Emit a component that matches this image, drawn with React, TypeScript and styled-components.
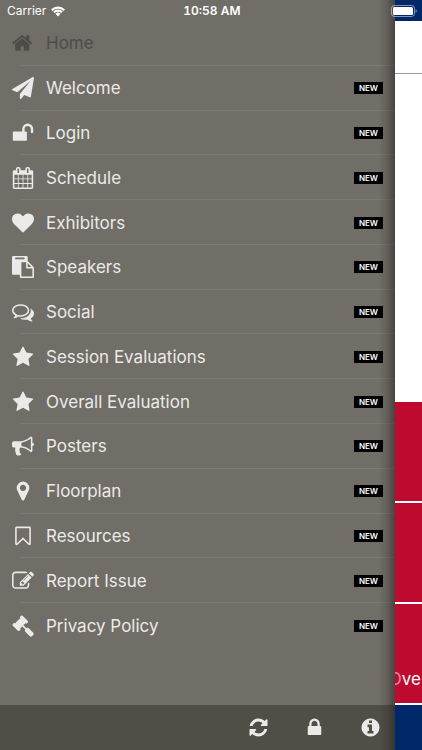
import React from "react";
import styled, { createGlobalStyle } from "styled-components";

const GlobalStyle = createGlobalStyle`
  *, *::before, *::after { box-sizing: border-box; }
  body {
    margin: 0;
    background: #fff;
    font-family: Inter, Roboto, "Liberation Sans", sans-serif;
  }
`;

const paths = {
  home: "M1408 992v480q0 26-19 45t-45 19h-384v-384h-256v384h-384q-26 0-45-19t-19-45v-480q0-1 .5-3t.5-3l575-474 575 474q1 2 1 6zm223-69l-62 74q-8 9-21 11h-3q-13 0-21-7l-692-577-692 577q-12 8-24 7-13-2-21-11l-62-74q-8-10-7-23.5t11-21.5l719-599q32-26 76-26t76 26l244 204v-195q0-14 9-23t23-9h192q14 0 23 9t9 23v408l219 182q10 8 11 21.5t-7 23.5z",
  plane: "M1764 11q33 24 27 64l-256 1536q-5 29-32 45-14 8-31 8-11 0-24-5l-453-185-242 295q-18 23-49 23-13 0-22-4-19-7-30.5-23.5t-11.5-36.5v-349l864-1059-1069 925-395-162q-37-14-40-55-2-40 32-59l1664-960q15-9 32-9 20 0 36 11z",
  unlock: "M1728 576v256q0 26-19 45t-45 19h-64q-26 0-45-19t-19-45v-256q0-106-75-181t-181-75-181 75-75 181v192h96q40 0 68 28t28 68v576q0 40-28 68t-68 28h-960q-40 0-68-28t-28-68v-576q0-40 28-68t68-28h672v-192q0-185 131.5-316.5t316.5-131.5 316.5 131.5 131.5 316.5z",
  calendar: "M192 1664h288v-288h-288v288zm352 0h320v-288h-320v288zm-352-352h288v-320h-288v320zm352 0h320v-320h-320v320zm-352-384h288v-288h-288v288zm736 736h320v-288h-320v288zm-384-736h320v-288h-320v288zm768 736h288v-288h-288v288zm-384-352h320v-320h-320v320zm-352-864v-288q0-13-9.5-22.5t-22.5-9.5h-64q-13 0-22.5 9.5t-9.5 22.5v288q0 13 9.5 22.5t22.5 9.5h64q13 0 22.5-9.5t9.5-22.5zm736 864h288v-320h-288v320zm-384-384h320v-288h-320v288zm384 0h288v-288h-288v288zm32-480v-288q0-13-9.5-22.5t-22.5-9.5h-64q-13 0-22.5 9.5t-9.5 22.5v288q0 13 9.5 22.5t22.5 9.5h64q13 0 22.5-9.5t9.5-22.5zm384-64v1280q0 52-38 90t-90 38h-1408q-52 0-90-38t-38-90v-1280q0-52 38-90t90-38h128v-96q0-66 47-113t113-47h64q66 0 113 47t47 113v96h384v-96q0-66 47-113t113-47h64q66 0 113 47t47 113v96h128q52 0 90 38t38 90z",
  heart: "M896 1664q-26 0-44-18l-624-602q-10-8-27.5-26t-55.5-65.5-68-97.5-53.5-121-23.5-138q0-220 127-344t351-124q62 0 126.5 21.5t120 58 95.5 68.5 76 68q36-36 76-68t95.5-68.5 120-58 126.5-21.5q224 0 351 124t127 344q0 221-229 450l-623 600q-18 18-44 18z",
  paste: "M768 1664h896v-640h-416q-40 0-68-28t-28-68v-416h-384v1152zm256-1440v-64q0-13-9.5-22.5t-22.5-9.5h-704q-13 0-22.5 9.5t-9.5 22.5v64q0 13 9.5 22.5t22.5 9.5h704q13 0 22.5-9.5t9.5-22.5zm256 672h299l-299-299v299zm512 128v672q0 40-28 68t-68 28h-960q-40 0-68-28t-28-68v-160h-544q-40 0-68-28t-28-68v-1344q0-40 28-68t68-28h1088q40 0 68 28t28 68v328q21 13 36 28l408 408q28 28 48 76t20 88z",
  comments: "M704 384q-153 0-286 52t-211.5 141-78.5 191q0 82 53 158t149 132l97 56-35 84q34-20 62-39l44-31 53 10q78 14 153 14 153 0 286-52t211.5-141 78.5-191-78.5-191-211.5-141-286-52zm0-128q191 0 353.5 68.5t256.5 186.5 94 257-94 257-256.5 186.5-353.5 68.5q-86 0-176-16-124 88-278 128-36 9-86 16h-3q-11 0-20.5-8t-11.5-21q-1-3-1-6.5t.5-6.5 2-6l2.5-5 3.5-5.5 4-5 4.5-5 4-4.5q5-6 23-25t26-29.5 22.5-29 25-38.5 20.5-44q-124-72-195-177t-71-224q0-139 94-257t256.5-186.5 353.5-68.5zm822 1169q10 24 20.5 44t25 38.5 22.5 29 26 29.5 23 25q1 1 4 4.5t4.5 5 4 5 3.5 5.5l2.5 5 2 6 .5 6.5-1 6.5q-3 14-13 22t-22 7q-50-7-86-16-154-40-278-128-90 16-176 16-271 0-472-132 58 4 88 4 161 0 309-45t264-129q125-92 192-212t67-254q0-77-23-152 129 71 204 178t75 230q0 120-71 224.5t-195 176.5z",
  star: "M1728 647q0 22-26 48l-363 354 86 500q1 7 1 20 0 21-10.5 35.5t-30.5 14.5q-19 0-40-12l-449-236-449 236q-22 12-40 12-21 0-31.5-14.5t-10.5-35.5q0-6 2-20l86-500-364-354q-25-27-25-48 0-37 56-46l502-73 225-455q19-41 49-41t49 41l225 455 502 73q56 9 56 46z",
  bullhorn: "M1664 640q53 0 90.5 37.5t37.5 90.5-37.5 90.5-90.5 37.5v384q0 52-38 90t-90 38q-417-347-812-380-58 19-91 66t-31 100.5 40 92.5q-20 33-23 65.5t6 58 33.5 55 48 50 61.5 50.5q-29 58-111.5 83t-168.5 11.5-132-55.5q-7-23-29.5-87.5t-32-94.5-23-89-15-101 3.5-98.5 22-110.5h-122q-66 0-113-47t-47-113v-192q0-66 47-113t113-47h480q435 0 896-384 52 0 90 38t38 90v384zm-128 604v-954q-394 302-768 343v270q377 42 768 341z",
  marker: "M1152 640q0-106-75-181t-181-75-181 75-75 181 75 181 181 75 181-75 75-181zm256 0q0 109-33 179l-364 774q-16 33-47.5 52t-67.5 19-67.5-19-46.5-52l-365-774q-33-70-33-179 0-212 150-362t362-150 362 150 150 362z",
  bookmark: "M1408 256h-1024v1242l423-406 89-85 89 85 423 406v-1242zm12-128q23 0 44 9 33 13 52.5 41t19.5 62v1289q0 34-19.5 62t-52.5 41q-19 8-44 8-48 0-83-32l-441-424-441 424q-36 33-83 33-23 0-44-9-33-13-52.5-41t-19.5-62v-1289q0-34 19.5-62t52.5-41q21-9 44-9h1048z",
  edit: "M888 1184l116-116-152-152-116 116v56h96v96h56zm440-720q-16-16-33 1l-350 350q-17 17-1 33t33-1l350-350q17-17 1-33zm80 594v190q0 119-84.5 203.5t-203.5 84.5h-832q-119 0-203.5-84.5t-84.5-203.5v-832q0-119 84.5-203.5t203.5-84.5h832q63 0 117 25 15 7 18 23 3 17-9 29l-49 49q-14 14-32 8-23-6-45-6h-832q-66 0-113 47t-47 113v832q0 66 47 113t113 47h832q66 0 113-47t47-113v-126q0-13 9-22l64-64q15-15 35-7t20 29zm-96-738l288 288-672 672h-288v-288zm444 132l-92 92-288-288 92-92q28-28 68-28t68 28l152 152q28 28 28 68t-28 68z",
  gavel: "M1771 1536q0 53-37 90l-107 108q-39 37-91 37-53 0-90-37l-363-364q-38-36-38-90 0-53 43-96l-256-256-126 126q-14 14-34 14t-34-14q2 2 12.5 12t12.5 13 10 11.5 10 13.5 6 13.5 5.5 16.5 1.5 18q0 38-28 68-3 3-16.5 18t-19 20.5-18.5 16.5-22 15.5-22 9-26 4.5q-40 0-68-28l-408-408q-28-28-28-68 0-13 4.5-26t9-22 15.5-22 16.5-18.5 20.5-19 18-16.5q30-28 68-28 10 0 18 1.5t16.5 5.5 13.5 6 13.5 10 11.5 10 13 12.5 12 12.5q-14-14-14-34t14-34l348-348q14-14 34-14t34 14q-2-2-12.5-12t-12.5-13-10-11.5-10-13.5-6-13.5-5.5-16.5-1.5-18q0-38 28-68 3-3 16.5-18t19-20.5 18.5-16.5 22-15.5 22-9 26-4.5q40 0 68 28l408 408q28 28 28 68 0 13-4.5 26t-9 22-15.5 22-16.5 18.5-20.5 19-18 16.5q-30 28-68 28-10 0-18-1.5t-16.5-5.5-13.5-6-13.5-10-11.5-10-13-12.5-12-12.5q14 14 14 34t-14 34l-126 126 256 256q43-43 96-43 52 0 91 37l363 363q37 39 37 91z",
  refresh: "M1639 1056q0 5-1 7-64 268-268 434.5t-478 166.5q-146 0-282.5-55t-243.5-157l-129 129q-19 19-45 19t-45-19-19-45v-448q0-26 19-45t45-19h448q26 0 45 19t19 45-19 45l-137 137q71 66 161 102t187 36q134 0 250-65t186-179q11-17 53-117 8-23 30-23h192q13 0 22.5 9.5t9.5 22.5zm25-800v448q0 26-19 45t-45 19h-448q-26 0-45-19t-19-45 19-45l138-138q-148-137-349-137-134 0-250 65t-186 179q-11 17-53 117-8 23-30 23h-199q-13 0-22.5-9.5t-9.5-22.5v-7q65-268 270-434.5t480-166.5q146 0 284 55.5t245 156.5l130-129q19-19 45-19t45 19 19 45z",
  lock: "M640 768h512v-192q0-106-75-181t-181-75-181 75-75 181v192zm832 96v576q0 40-28 68t-68 28h-960q-40 0-68-28t-28-68v-576q0-40 28-68t68-28h32v-192q0-184 132-316t316-132 316 132 132 316v192h32q40 0 68 28t28 68z",
  info: "M1152 1376v-160q0-14-9-23t-23-9h-96v-512q0-14-9-23t-23-9h-320q-14 0-23 9t-9 23v160q0 14 9 23t23 9h96v320h-96q-14 0-23 9t-9 23v160q0 14 9 23t23 9h448q14 0 23-9t9-23zm-128-896v-160q0-14-9-23t-23-9h-192q-14 0-23 9t-9 23v160q0 14 9 23t23 9h192q14 0 23-9t9-23zm640 416q0 209-103 385.5t-279.5 279.5-385.5 103-385.5-103-279.5-279.5-103-385.5 103-385.5 279.5-279.5 385.5-103 385.5 103 279.5 279.5 103 385.5z",
};

type IconName = keyof typeof paths;

const items: { icon: IconName; label: string; current?: boolean }[] = [
  { icon: "home", label: "Home", current: true },
  { icon: "plane", label: "Welcome" },
  { icon: "unlock", label: "Login" },
  { icon: "calendar", label: "Schedule" },
  { icon: "heart", label: "Exhibitors" },
  { icon: "paste", label: "Speakers" },
  { icon: "comments", label: "Social" },
  { icon: "star", label: "Session Evaluations" },
  { icon: "star", label: "Overall Evaluation" },
  { icon: "bullhorn", label: "Posters" },
  { icon: "marker", label: "Floorplan" },
  { icon: "bookmark", label: "Resources" },
  { icon: "edit", label: "Report Issue" },
  { icon: "gavel", label: "Privacy Policy" },
];

const Screen = styled.div`
  position: relative;
  display: grid;
  grid-template-columns: minmax(0, 1fr) 27px;
  min-height: 100vh;
`;

const StatusBar = styled.header`
  position: absolute;
  inset: 0 0 auto 0;
  z-index: 2;
  display: grid;
  grid-template-columns: 1fr auto 1fr;
  align-items: center;
  height: 22px;
  padding: 0 5px 0 7px;
  color: #fff;
  font-size: 12px;
  line-height: 16px;
`;

const Carrier = styled.span`
  display: flex;
  align-items: center;
  gap: 5px;
`;

const Clock = styled.time`
  font-weight: 600;
  font-variant-numeric: tabular-nums;
`;

const Battery = styled.svg`
  justify-self: end;
`;

const Drawer = styled.aside`
  position: relative;
  display: flex;
  flex-direction: column;
  background: #716d67;

  &::after {
    content: "";
    position: absolute;
    inset: 0 0 0 auto;
    width: 16px;
    background: linear-gradient(to right, rgba(30, 28, 25, 0), rgba(30, 28, 25, 0.18) 50%, rgba(30, 28, 25, 0.5));
    pointer-events: none;
  }
`;

const Nav = styled.nav`
  flex: 1;
  display: flex;
  padding: 21px 0 57px;
`;

const Menu = styled.ul`
  flex: 1;
  display: grid;
  grid-auto-rows: minmax(44px, 1fr);
  margin: 0;
  padding: 0;
  list-style: none;
`;

const MenuItem = styled.li`
  display: flex;
  background: linear-gradient(#7c7873, #7c7873) 20px 100% / 100% 1px no-repeat;

  &:last-child {
    background: none;
  }
`;

const MenuLink = styled.a<{ $current?: boolean }>`
  flex: 1;
  display: grid;
  grid-template-columns: 22px 1fr auto;
  align-items: center;
  gap: 12px;
  padding: 0 12px;
  color: ${(p) => (p.$current ? "#4f4c47" : "#ebeae9")};
  font-size: 17px;
  line-height: 24px;
  text-decoration: none;
`;

const Badge = styled.span`
  width: 29px;
  background: #000;
  color: #fff;
  font-size: 8px;
  font-weight: 600;
  line-height: 12px;
  text-align: center;
`;

const Toolbar = styled.footer`
  display: flex;
  justify-content: flex-end;
  align-items: center;
  gap: 24px;
  height: 45px;
  padding-right: 9px;
  background: #514e48;
`;

const ToolButton = styled.button`
  display: grid;
  place-items: center;
  width: 32px;
  height: 32px;
  padding: 0;
  border: 0;
  background: none;
  color: #ebeae9;
`;

const Page = styled.main`
  display: flex;
  flex-direction: column;
  overflow: hidden;
  background: #fff;
`;

const PageTop = styled.div`
  height: 21px;
  background: #002868;
`;

const PageTitle = styled.div`
  height: 53px;
  border-bottom: 1px solid #9099b0;
`;

const Banner = styled.div`
  flex: 1;
`;

const Tiles = styled.div`
  display: grid;
  grid-template-columns: minmax(0, 1fr);
  gap: 2px;
  padding-bottom: 2px;
`;

const Tile = styled.div`
  display: flex;
  justify-content: flex-end;
  align-items: flex-end;
  height: 99px;
  padding: 0 1px 12px 0;
  background: #bf0a30;
  color: #fff;
  font-size: 17px;
  line-height: 24px;
`;

const Faded = styled.span`
  opacity: 0.5;
`;

const PageBottom = styled.div`
  height: 45px;
  background: #002868;
`;

function Icon({ name, size }: { name: IconName; size: number }) {
  return (
    <svg width={size} height={size} viewBox="0 0 1792 1792" fill="currentColor" aria-hidden="true">
      <path d={paths[name]} />
    </svg>
  );
}

export default function App() {
  return (
    <>
      <GlobalStyle />
      <Screen>
        <StatusBar>
          <Carrier>
            Carrier
            <svg width="14" height="11" viewBox="0 0 14 11" fill="currentColor" aria-hidden="true">
              <path d="M0 3.4A10 10 0 0 1 14 3.4L12.5 4.9A7.8 7.8 0 0 0 1.5 4.9Z" />
              <path d="M2.2 5.6A6.8 6.8 0 0 1 11.8 5.6L10.3 7.1A4.7 4.7 0 0 0 3.7 7.1Z" />
              <path d="M4.4 7.8A3.7 3.7 0 0 1 9.6 7.8L7 10.5Z" />
            </svg>
          </Carrier>
          <Clock>10:58 AM</Clock>
          <Battery width="26" height="12" viewBox="0 0 26 12" aria-label="Battery full" role="img">
            <rect x="0.5" y="0.5" width="23" height="11" rx="3" fill="none" stroke="#fff" strokeOpacity="0.5" />
            <rect x="2" y="2" width="20" height="8" rx="1.5" fill="#fff" />
            <path d="M24.6 4.2q1.2.5 1.2 1.8t-1.2 1.8z" fill="#fff" fillOpacity="0.5" />
          </Battery>
        </StatusBar>
        <Drawer>
          <Nav aria-label="Main menu">
            <Menu>
              {items.map((item) => (
                <MenuItem key={item.label}>
                  <MenuLink href="#" $current={item.current} aria-current={item.current ? "page" : undefined}>
                    <Icon name={item.icon} size={22} />
                    <span>{item.label}</span>
                    {!item.current && <Badge>NEW</Badge>}
                  </MenuLink>
                </MenuItem>
              ))}
            </Menu>
          </Nav>
          <Toolbar>
            <ToolButton type="button" aria-label="Refresh">
              <Icon name="refresh" size={21} />
            </ToolButton>
            <ToolButton type="button" aria-label="Lock">
              <Icon name="lock" size={21} />
            </ToolButton>
            <ToolButton type="button" aria-label="Information">
              <Icon name="info" size={21} />
            </ToolButton>
          </Toolbar>
        </Drawer>
        <Page>
          <PageTop />
          <PageTitle />
          <Banner />
          <Tiles>
            <Tile />
            <Tile />
            <Tile>
              <Faded>O</Faded>ve
            </Tile>
          </Tiles>
          <PageBottom />
        </Page>
      </Screen>
    </>
  );
}
